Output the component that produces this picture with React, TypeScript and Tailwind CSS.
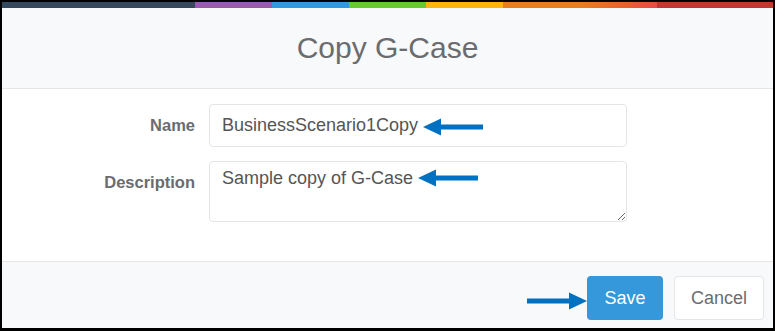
import React from 'react'

const FONT = { fontFamily: '"Liberation Sans", Arial, Helvetica, sans-serif' }

function Arrow({ dir, className }: { dir: 'left' | 'right'; className?: string }) {
  // Office-style callout arrow, drawn pointing left and mirrored when needed
  return (
    <svg
      width="60"
      height="18"
      viewBox="0 0 60 18"
      className={className}
      style={dir === 'right' ? { transform: 'scaleX(-1)' } : undefined}
      aria-hidden
    >
      <polygon
        points="0,9 18,0.5 18,6.5 60,6.5 60,11.5 18,11.5 18,17.5"
        fill="#0070c0"
      />
    </svg>
  )
}

export default function App() {
  return (
    <div
      className="flex h-[331px] w-[775px] flex-col overflow-hidden border-b-[3px] border-l-2 border-r-2 border-t-2 border-black bg-white"
      style={FONT}
    >
      <div className="h-[6px] shrink-0 bg-[linear-gradient(to_right,#34495e,#34495e_25%,#9b59b6_25%,#9b59b6_35%,#3498db_35%,#3498db_45%,#62cb31_45%,#62cb31_55%,#ffb606_55%,#ffb606_65%,#e67e22_65%,#e67e22_75%,#e74c3c_85%,#e74c3c_85%,#c0392b_85%,#c0392b_100%)]" />

      <div className="flex h-[81px] shrink-0 items-center justify-center border-b border-[#e4e5e7] bg-[#f7f9fa]">
        <h4 className="text-[30px] font-normal leading-none text-[#6a6c6f]">Copy G-Case</h4>
      </div>

      <div className="flex h-[172px] shrink-0 flex-col gap-[14px] pt-[15px]">
        <div className="flex items-center">
          <label className="w-[193px] text-right text-[16.5px] font-bold text-[#6a6c6f]">Name</label>
          <div className="relative ml-[14px]">
            <input
              defaultValue="BusinessScenario1Copy"
              className="h-[43px] w-[418px] rounded-[4px] border border-[#e4e5e7] bg-white px-[12px] text-[18px] text-[#555] outline-none"
              style={FONT}
            />
            <Arrow dir="left" className="pointer-events-none absolute left-[214px] top-[14px]" />
          </div>
        </div>
        <div className="flex items-start">
          <label className="mt-[9px] w-[193px] text-right text-[16.5px] font-bold text-[#6a6c6f]">
            Description
          </label>
          <div className="relative ml-[14px]">
            <textarea
              defaultValue="Sample copy of G-Case"
              className="block h-[61px] w-[418px] rounded-[4px] border border-[#e4e5e7] bg-white px-[12px] py-[4px] text-[18px] leading-[25px] text-[#555] outline-none"
              style={FONT}
            />
            <Arrow dir="left" className="pointer-events-none absolute left-[209px] top-[8px]" />
          </div>
        </div>
      </div>

      <div className="flex flex-1 items-start justify-end border-t border-[#e4e5e7] bg-[#f7f9fa] pr-[9px] pt-[14px]">
        <Arrow dir="right" className="mt-[16px]" />
        <button className="h-[44px] w-[76px] rounded-[4px] bg-[#3498db] text-[18px] text-white">
          Save
        </button>
        <button className="ml-[11px] h-[44px] w-[90px] rounded-[4px] border border-[#e4e5e7] bg-white text-[18px] text-[#6a6c6f]">
          Cancel
        </button>
      </div>
    </div>
  )
}
